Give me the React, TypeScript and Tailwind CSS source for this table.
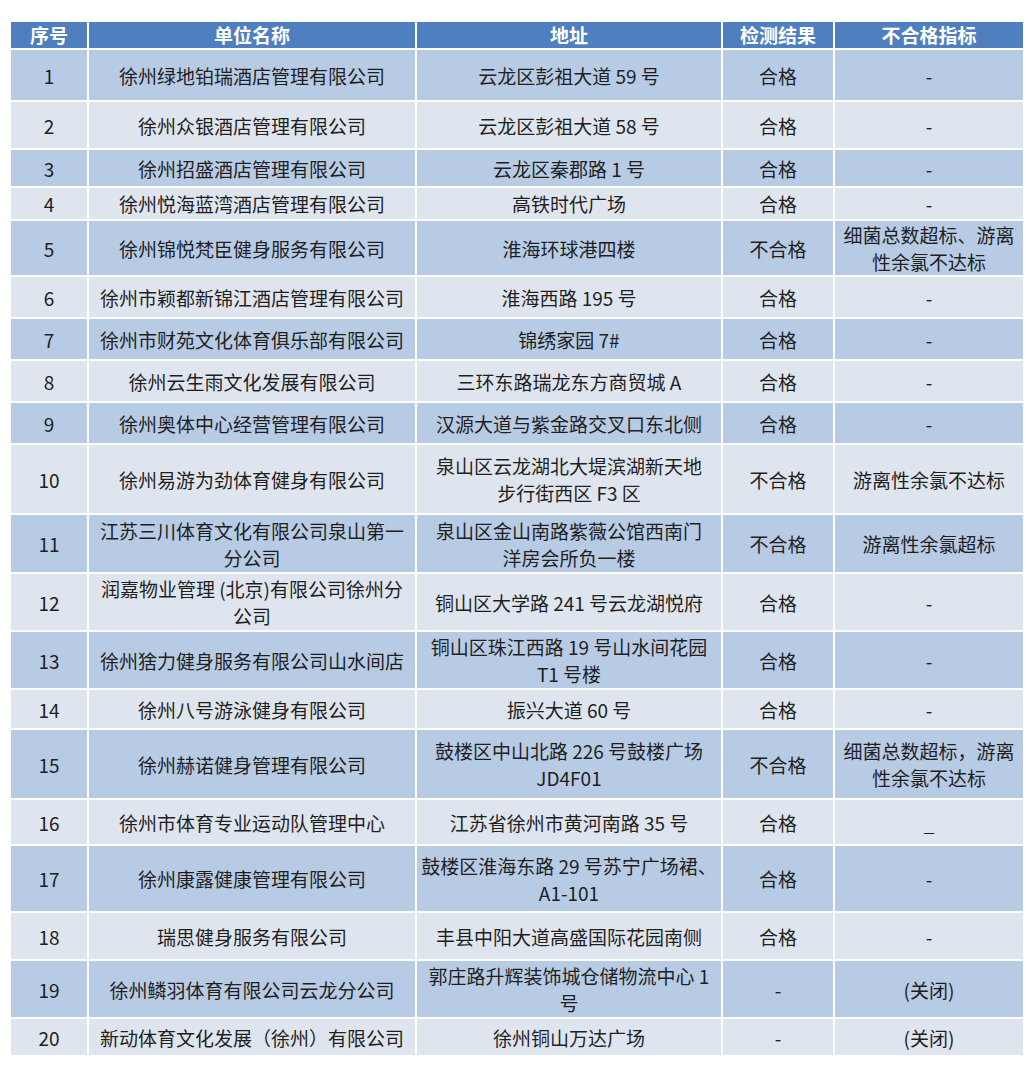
import React from "react";

type Row = {
  no: string;
  name: React.ReactNode;
  addr: React.ReactNode;
  result: string;
  bad: React.ReactNode;
  h: string;
};

const rows: Row[] = [
  { no: "1", name: "徐州绿地铂瑞酒店管理有限公司", addr: "云龙区彭祖大道 59 号", result: "合格", bad: "-", h: "h-[52px]" },
  { no: "2", name: "徐州众银酒店管理有限公司", addr: "云龙区彭祖大道 58 号", result: "合格", bad: "-", h: "h-[48px]" },
  { no: "3", name: "徐州招盛酒店管理有限公司", addr: "云龙区秦郡路 1 号", result: "合格", bad: "-", h: "h-[38px]" },
  { no: "4", name: "徐州悦海蓝湾酒店管理有限公司", addr: "高铁时代广场", result: "合格", bad: "-", h: "h-[33px]" },
  {
    no: "5",
    name: "徐州锦悦梵臣健身服务有限公司",
    addr: "淮海环球港四楼",
    result: "不合格",
    bad: (
      <>
        细菌总数超标、游离
        <br />
        性余氯不达标
      </>
    ),
    h: "h-[55px]",
  },
  { no: "6", name: "徐州市颖都新锦江酒店管理有限公司", addr: "淮海西路 195 号", result: "合格", bad: "-", h: "h-[42px]" },
  { no: "7", name: "徐州市财苑文化体育俱乐部有限公司", addr: "锦绣家园 7#", result: "合格", bad: "-", h: "h-[42px]" },
  { no: "8", name: "徐州云生雨文化发展有限公司", addr: "三环东路瑞龙东方商贸城 A", result: "合格", bad: "-", h: "h-[42px]" },
  { no: "9", name: "徐州奥体中心经营管理有限公司", addr: "汉源大道与紫金路交叉口东北侧", result: "合格", bad: "-", h: "h-[42px]" },
  {
    no: "10",
    name: "徐州易游为劲体育健身有限公司",
    addr: (
      <>
        泉山区云龙湖北大堤滨湖新天地
        <br />
        步行街西区 F3 区
      </>
    ),
    result: "不合格",
    bad: "游离性余氯不达标",
    h: "h-[70px]",
  },
  {
    no: "11",
    name: (
      <>
        江苏三川体育文化有限公司泉山第一
        <br />
        分公司
      </>
    ),
    addr: (
      <>
        泉山区金山南路紫薇公馆西南门
        <br />
        洋房会所负一楼
      </>
    ),
    result: "不合格",
    bad: "游离性余氯超标",
    h: "h-[59px]",
  },
  {
    no: "12",
    name: (
      <>
        润嘉物业管理 (北京)有限公司徐州分
        <br />
        公司
      </>
    ),
    addr: "铜山区大学路 241 号云龙湖悦府",
    result: "合格",
    bad: "-",
    h: "h-[58px]",
  },
  {
    no: "13",
    name: "徐州猞力健身服务有限公司山水间店",
    addr: (
      <>
        铜山区珠江西路 19 号山水间花园
        <br />
        T1 号楼
      </>
    ),
    result: "合格",
    bad: "-",
    h: "h-[58px]",
  },
  { no: "14", name: "徐州八号游泳健身有限公司", addr: "振兴大道 60 号", result: "合格", bad: "-", h: "h-[40px]" },
  {
    no: "15",
    name: "徐州赫诺健身管理有限公司",
    addr: (
      <>
        鼓楼区中山北路 226 号鼓楼广场
        <br />
        JD4F01
      </>
    ),
    result: "不合格",
    bad: (
      <>
        细菌总数超标，游离
        <br />
        性余氯不达标
      </>
    ),
    h: "h-[70px]",
  },
  { no: "16", name: "徐州市体育专业运动队管理中心", addr: "江苏省徐州市黄河南路 35 号", result: "合格", bad: "_", h: "h-[46px]" },
  {
    no: "17",
    name: "徐州康露健康管理有限公司",
    addr: (
      <>
        鼓楼区淮海东路 29 号苏宁广场裙、
        <br />
        A1-101
      </>
    ),
    result: "合格",
    bad: "-",
    h: "h-[67px]",
  },
  { no: "18", name: "瑞思健身服务有限公司", addr: "丰县中阳大道高盛国际花园南侧", result: "合格", bad: "-", h: "h-[48px]" },
  {
    no: "19",
    name: "徐州鳞羽体育有限公司云龙分公司",
    addr: (
      <>
        郭庄路升辉装饰城仓储物流中心 1
        <br />
        号
      </>
    ),
    result: "-",
    bad: "(关闭)",
    h: "h-[58px]",
  },
  { no: "20", name: "新动体育文化发展（徐州）有限公司", addr: "徐州铜山万达广场", result: "-", bad: "(关闭)", h: "h-[38px]" },
];

const cell = "border-2 border-white px-1 text-center align-middle leading-[27px] whitespace-nowrap";

export default function App() {
  return (
    <div className="min-h-[1081px] bg-white pt-[20px] pl-[9px] font-['Noto_Sans_CJK_SC','Noto_Sans',sans-serif] text-[19px] text-[#1f1f1f]">
      <table className="table-fixed border-collapse w-[1014px]">
        <colgroup>
          <col className="w-[78px]" />
          <col className="w-[328px]" />
          <col className="w-[306px]" />
          <col className="w-[112px]" />
          <col className="w-[190px]" />
        </colgroup>
        <thead>
          <tr className="h-[28px] bg-[#4f7fbe] text-white font-bold text-[19px] leading-[24px]">
            <th className="border-2 border-white px-1 text-center align-middle whitespace-nowrap">序号</th>
            <th className="border-2 border-white px-1 text-center align-middle whitespace-nowrap">单位名称</th>
            <th className="border-2 border-white px-1 text-center align-middle whitespace-nowrap">地址</th>
            <th className="border-2 border-white px-1 text-center align-middle whitespace-nowrap">检测结果</th>
            <th className="border-2 border-white px-1 text-center align-middle whitespace-nowrap">不合格指标</th>
          </tr>
        </thead>
        <tbody>
          {rows.map((r, i) => (
            <tr key={r.no} className={`${r.h} ${i % 2 === 0 ? "bg-[#b7cbe5]" : "bg-[#dfe5ee]"}`}>
              <td className={cell}>{r.no}</td>
              <td className={cell}>{r.name}</td>
              <td className={cell}>{r.addr}</td>
              <td className={cell}>{r.result}</td>
              <td className={cell}>{r.bad}</td>
            </tr>
          ))}
        </tbody>
      </table>
    </div>
  );
}
